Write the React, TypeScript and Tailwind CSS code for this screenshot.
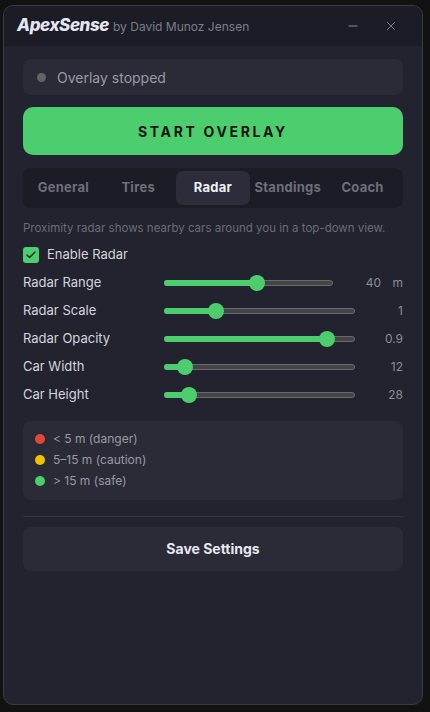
import { Check, Minus, X } from 'lucide-react';

const sliders = [
	{ label: 'Radar Range', value: '40', unit: 'm', pct: 55.6 },
	{ label: 'Radar Scale', value: '1', pct: 25 },
	{ label: 'Radar Opacity', value: '0.9', pct: 88.6 },
	{ label: 'Car Width', value: '12', pct: 7.4 },
	{ label: 'Car Height', value: '28', pct: 9.7 },
];

const tabs = ['General', 'Tires', 'Radar', 'Standings', 'Coach'];

const legend = [
	{ color: 'bg-[#e2483a]', text: '< 5 m (danger)' },
	{ color: 'bg-[#efc300]', text: '5–15 m (caution)' },
	{ color: 'bg-[#4cce6e]', text: '> 15 m (safe)' },
];

const Slider = ({ pct }: { pct: number }) => (
	<div className="relative flex-1 h-4 flex items-center">
		<div className="w-full h-[6px] rounded-full bg-[#454548] border border-[#6a6a6e]" />
		{/* заполненная часть + ползунок */}
		<div className="absolute inset-x-2 top-0 h-4">
			<div
				className="absolute left-[-8px] top-[5px] h-[6px] rounded-full bg-[#4cce6e]"
				style={{ width: `calc(${pct}% + 8px)` }}
			/>
			<div
				className="absolute top-0 w-4 h-4 -ml-2 rounded-full bg-[#4cce6e]"
				style={{ left: `${pct}%` }}
			/>
		</div>
	</div>
);

const App = () => {
	return (
		<div
			className="w-[430px] h-[712px] bg-[#121212] pt-[5px] px-[3px]"
			style={{ fontFamily: 'Inter, "Liberation Sans", sans-serif' }}
		>
			<div className="w-[420px] h-[700px] rounded-[10px] border border-[#3a3b40] bg-[#22232f] overflow-hidden flex flex-col">
				{/* Заголовок окна */}
				<div className="h-[40px] bg-[#1b1c26] flex items-center pl-[13px] pr-[24px] shrink-0">
					<span className="text-[17px] font-extrabold italic text-[#e4e6f0] tracking-tight">
						ApexSense
					</span>
					<span className="ml-[4px] text-[12px] text-[#7d7e88] mt-[2px]">
						by David Munoz Jensen
					</span>
					<div className="ml-auto flex items-center gap-[24px] text-[#8a8b94]">
						<Minus size={14} strokeWidth={2} />
						<X size={14} strokeWidth={1.5} />
					</div>
				</div>

				<div className="px-[19px] pt-[13px] flex flex-col">
					{/* Статус */}
					<div className="h-[36px] rounded-[8px] bg-[#2b2b38] flex items-center px-[14px] gap-[11px]">
						<span className="w-[9px] h-[9px] rounded-full bg-[#636368]" />
						<span className="text-[14px] text-[#9a9aa4]">Overlay stopped</span>
					</div>

					<button className="mt-[12px] h-[48px] rounded-[10px] bg-[#4cce6e] text-[#141414] text-[14px] font-bold tracking-[0.19em]">
						START OVERLAY
					</button>

					{/* Вкладки */}
					<div className="mt-[13px] h-[40px] rounded-[8px] bg-[#1b1c26] p-[3px] flex">
						{tabs.map((t) => (
							<div
								key={t}
								className={`flex-1 rounded-[7px] flex items-center justify-center text-[13px] font-bold tracking-[0.02em] ${
									t === 'Radar'
										? 'bg-[#2c2c3a] text-[#eef0f6]'
										: 'text-[#6e6f78]'
								}`}
							>
								{t}
							</div>
						))}
					</div>

					<p className="mt-[12px] text-[11.5px] text-[#6b6c76]">
						Proximity radar shows nearby cars around you in a top-down view.
					</p>

					<label className="mt-[8px] flex items-center gap-[8px]">
						<span className="w-4 h-4 rounded-[3px] bg-[#4cce6e] flex items-center justify-center">
							<Check size={12} strokeWidth={3} className="text-[#2b2b2b]" />
						</span>
						<span className="text-[13px] text-[#d4d5dc]">Enable Radar</span>
					</label>

					<div className="mt-[4px] flex flex-col">
						{sliders.map((s) => (
							<div key={s.label} className="h-[28px] flex items-center gap-2">
								<span className="w-[133px] text-[13px] text-[#d4d5dc]">
									{s.label}
								</span>
								<Slider pct={s.pct} />
								<span className="w-10 text-right text-[12px] text-[#8c8d96]">
									{s.value}
								</span>
								{s.unit && (
									<span className="w-[14px] text-right text-[12px] text-[#8c8d96]">
										{s.unit}
									</span>
								)}
							</div>
						))}
					</div>

					{/* Легенда */}
					<div className="mt-[12px] h-[79px] rounded-[8px] bg-[#2b2b38] px-[12px] flex flex-col justify-center gap-[5px]">
						{legend.map((l) => (
							<div key={l.text} className="flex items-center gap-[8px] h-4">
								<span className={`w-[10px] h-[10px] rounded-full ${l.color}`} />
								<span className="text-[12px] leading-4 text-[#9a9aa4]">{l.text}</span>
							</div>
						))}
					</div>

					<div className="mt-[16px] h-px bg-[#33343f]" />

					<button className="mt-[10px] h-[44px] rounded-[8px] bg-[#2b2b38] text-[14px] font-bold text-[#e6e8f0]">
						Save Settings
					</button>
				</div>
			</div>
		</div>
	);
};

export default App;
